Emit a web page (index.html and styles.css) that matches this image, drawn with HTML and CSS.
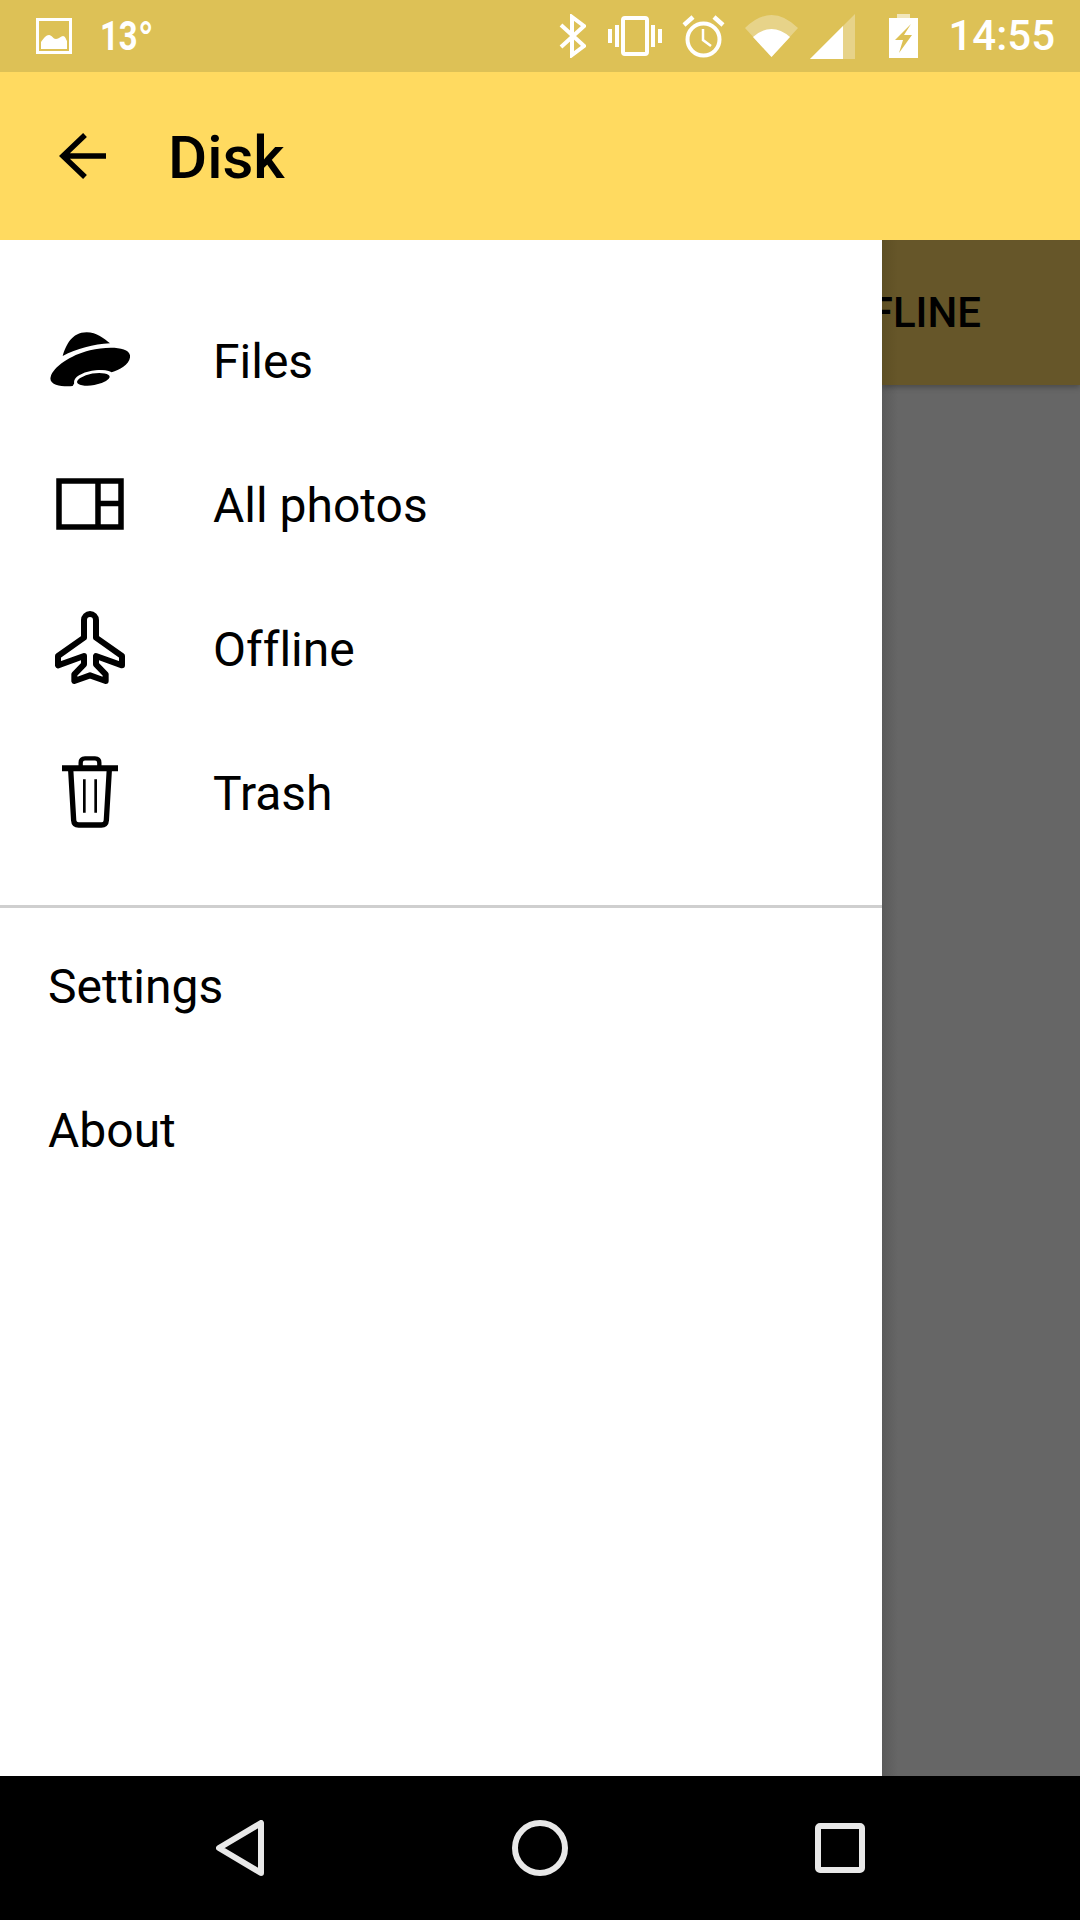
FILE: index.html
```html
<!DOCTYPE html>
<html lang="en">
<head>
<meta charset="utf-8">
<title>Disk</title>
<link rel="stylesheet" href="styles.css">
</head>
<body>
<div class="app">
  <header class="status">
    <svg class="st-image" width="36" height="36" viewBox="0 0 36 36"><rect x="1.500" y="1.500" width="33" height="33" fill="none" stroke="#fff" stroke-width="3"/><path d="M5 31V24C8 20 10 17 13 17C16 17 17 21 20 21C23 21 25 18 27 18C29 18 30 21 31 23V31Z" fill="#fff"/></svg>
    <span class="temp">13<span class="deg">°</span></span>
    <div class="status-right">
      <svg class="st-bt" width="27" height="44" viewBox="0 0 27 44"><path d="M2 11L25 32L13 41V3L25 12L2 33" fill="none" stroke="#fff" stroke-width="4"/></svg>
      <svg class="st-vib" width="54" height="40" viewBox="0 0 54 40"><rect x="15" y="2" width="24" height="36" rx="2" fill="none" stroke="#fff" stroke-width="4"/><path d="M0 13h4v14H0zM7 9h4v22H7zM43 9h4v22h-4zM50 13h4v14h-4z" fill="#fff"/></svg>
      <svg class="st-alarm" width="43" height="43" viewBox="0 0 43 43"><circle cx="21.500" cy="24.500" r="16" fill="none" stroke="#fff" stroke-width="4"/><path d="M2 10L11 2M32 2L41 10" stroke="#fff" stroke-width="4.500" fill="none"/><path d="M21 14V25L29 31" stroke="#fff" stroke-width="2.500" fill="none"/></svg>
      <svg class="st-wifi" width="53" height="42" viewBox="0 0 53 42"><path d="M0 13Q26.500 -13 53 13L26.500 42Z" fill="#fff" opacity=".3"/><path d="M8 22Q26.500 6 45 22L26.500 42Z" fill="#fff"/></svg>
      <svg class="st-signal" width="45" height="45" viewBox="0 0 45 45"><path d="M45 0V45H0Z" fill="#fff" opacity=".3"/><path d="M33 12V45H0Z" fill="#fff"/></svg>
      <svg class="st-batt" width="29" height="44" viewBox="0 0 29 44"><path d="M8 4V0H21V4Z" fill="#fff" opacity=".6"/><path d="M0 4H29V44H0Z" fill="#fff"/><path d="M22 10L6 26H14L10 39L23 21H15Z" fill="#DDC156"/></svg>
      <span class="time">14:55</span>
    </div>
  </header>

  <div class="toolbar">
    <svg class="back" width="48" height="48" viewBox="0 0 48 48"><path d="M48 24H5M27 3L5 24L27 45" fill="none" stroke="#000" stroke-width="5.500"/></svg>
    <span class="title">Disk</span>
  </div>

  <main class="main">
    <nav class="drawer">
      <ul class="menu menu-primary">
        <li class="item">
          <span class="item-icon">
            <svg width="80" height="56" viewBox="60 65 240 168"><path d="M98 137C108 105 125 66 170 66C200 66 222 85 240 99C190 102 140 115 98 137Z"/><path d="M62 200C70 170 120 135 180 120C230 108 295 108 300 135C303 160 270 178 245 186C225 172 150 180 128 227C100 230 55 225 62 200Z"/><ellipse cx="190" cy="207" rx="54" ry="22" transform="rotate(-10 190 207)" stroke="#fff" stroke-width="9"/></svg>
          </span>
          <span class="item-label">Files</span>
        </li>
        <li class="item">
          <span class="item-icon">
            <svg width="68" height="52" viewBox="0 0 68 52"><path d="M3 3H65V49H3ZM42 3V49M42 25.500H65" fill="none" stroke="#000" stroke-width="5.500"/></svg>
          </span>
          <span class="item-label">All photos</span>
        </li>
        <li class="item">
          <span class="item-icon">
            <svg width="70" height="74" viewBox="75 65 210 222"><path d="M162 92A18 18 0 0 1 198 92V145L276 200V228L198 200V225L227 255V275L180 258L133 275V255L162 225V200L84 228V200L162 145Z" fill="none" stroke="#000" stroke-width="18" stroke-linejoin="round"/></svg>
          </span>
          <span class="item-label">Offline</span>
        </li>
        <li class="item">
          <span class="item-icon">
            <svg width="56" height="72" viewBox="96 500 168 216"><path d="M96 537H264" stroke="#000" stroke-width="18"/><path d="M152 530V520Q152 507 165 507H195Q208 507 208 520V530" fill="none" stroke="#000" stroke-width="13"/><path d="M122 540L131 693Q132 707 146 707H214Q228 707 229 693L238 540" fill="none" stroke="#000" stroke-width="16"/><path d="M163 570V670M197 570V670" stroke="#000" stroke-width="8"/></svg>
          </span>
          <span class="item-label">Trash</span>
        </li>
      </ul>
      <ul class="menu menu-secondary">
        <li class="item"><span class="item-label">Settings</span></li>
        <li class="item"><span class="item-label">About</span></li>
      </ul>
    </nav>
    <div class="backdrop">
      <div class="tabs"><span class="tab">OFFLINE</span></div>
    </div>
  </main>

  <footer class="navbar">
    <svg width="49" height="56" viewBox="0 0 49 56"><path d="M3 28L45 3V53Z" fill="none" stroke="#E8E8E8" stroke-width="6" stroke-linejoin="round"/></svg>
    <svg width="56" height="56" viewBox="0 0 56 56"><circle cx="28" cy="28" r="25" fill="none" stroke="#E8E8E8" stroke-width="6"/></svg>
    <svg width="50" height="50" viewBox="0 0 50 50"><rect x="3" y="3" width="44" height="44" rx="2" fill="none" stroke="#E8E8E8" stroke-width="6"/></svg>
  </footer>
</div>
</body>
</html>
```
FILE: styles.css
```css
* { box-sizing: border-box; }
html, body { margin: 0; padding: 0; }
body { width: 1080px; height: 1920px; overflow: hidden; font-family: Roboto, "Noto Sans", sans-serif; color: #000; background: #fff; font-variant-ligatures: none; }
svg { display: block; flex: none; }

.app { display: flex; flex-direction: column; height: 1920px; }

/* status bar */
.status { height: 72px; background: #DDC156; display: flex; align-items: center; padding: 0 25px 0 36px; color: #fff; }
.temp { font-size: 40px; font-weight: 700; margin-left: 28px; width: 70px; white-space: nowrap; transform: scaleX(.82); transform-origin: left center; }
.deg { font-size: 52px; font-weight: 400; line-height: 0; vertical-align: -8px; margin-left: 0; }
.status-right { margin-left: auto; display: flex; align-items: center; }
.st-vib { margin-left: 22px; }
.st-alarm { margin-left: 20px; }
.st-wifi { margin-left: 20px; }
.st-signal { margin-left: 12px; }
.st-batt { margin-left: 34px; }
.time { margin-left: 30px; font-size: 42px; font-weight: 500; line-height: 48px; }

/* toolbar */
.toolbar { height: 168px; background: #FFDA60; display: flex; align-items: center; padding-left: 58px; }
.title { margin-left: 62px; padding-top: 4px; font-size: 60px; font-weight: 500; line-height: 72px; }

/* main */
.main { flex: 1; display: flex; min-height: 0; }
.drawer { width: 882px; flex: none; background: #fff; padding-top: 48px; }
.menu { list-style: none; margin: 0; padding: 0; }
.menu-primary { padding-bottom: 42px; border-bottom: 3px solid #CFCFCF; margin-bottom: 5px; height: 620px; }
.item { height: 144px; display: flex; align-items: center; padding-left: 48px; font-size: 48px; line-height: 56px; }
.item-icon { width: 84px; margin-right: 81px; display: flex; justify-content: center; }
.item-label { padding-top: 3px; }

/* dimmed content */
.backdrop { flex: 1; min-width: 0; background: linear-gradient(to right, #5A5A5A, #666 16px); overflow: hidden; }
.tabs { height: 145px; background: linear-gradient(to right, #5E4F24, #665629 16px); display: flex; align-items: center; justify-content: flex-end; padding-right: 99px; box-shadow: 0 2px 6px rgba(0,0,0,.3); overflow: hidden; }
.tab { font-size: 42px; font-weight: 500; white-space: nowrap; flex: none; color: #000; }

/* nav bar */
.navbar { height: 144px; background: #000; display: flex; align-items: center; padding-left: 216px; gap: 247px; }
```
